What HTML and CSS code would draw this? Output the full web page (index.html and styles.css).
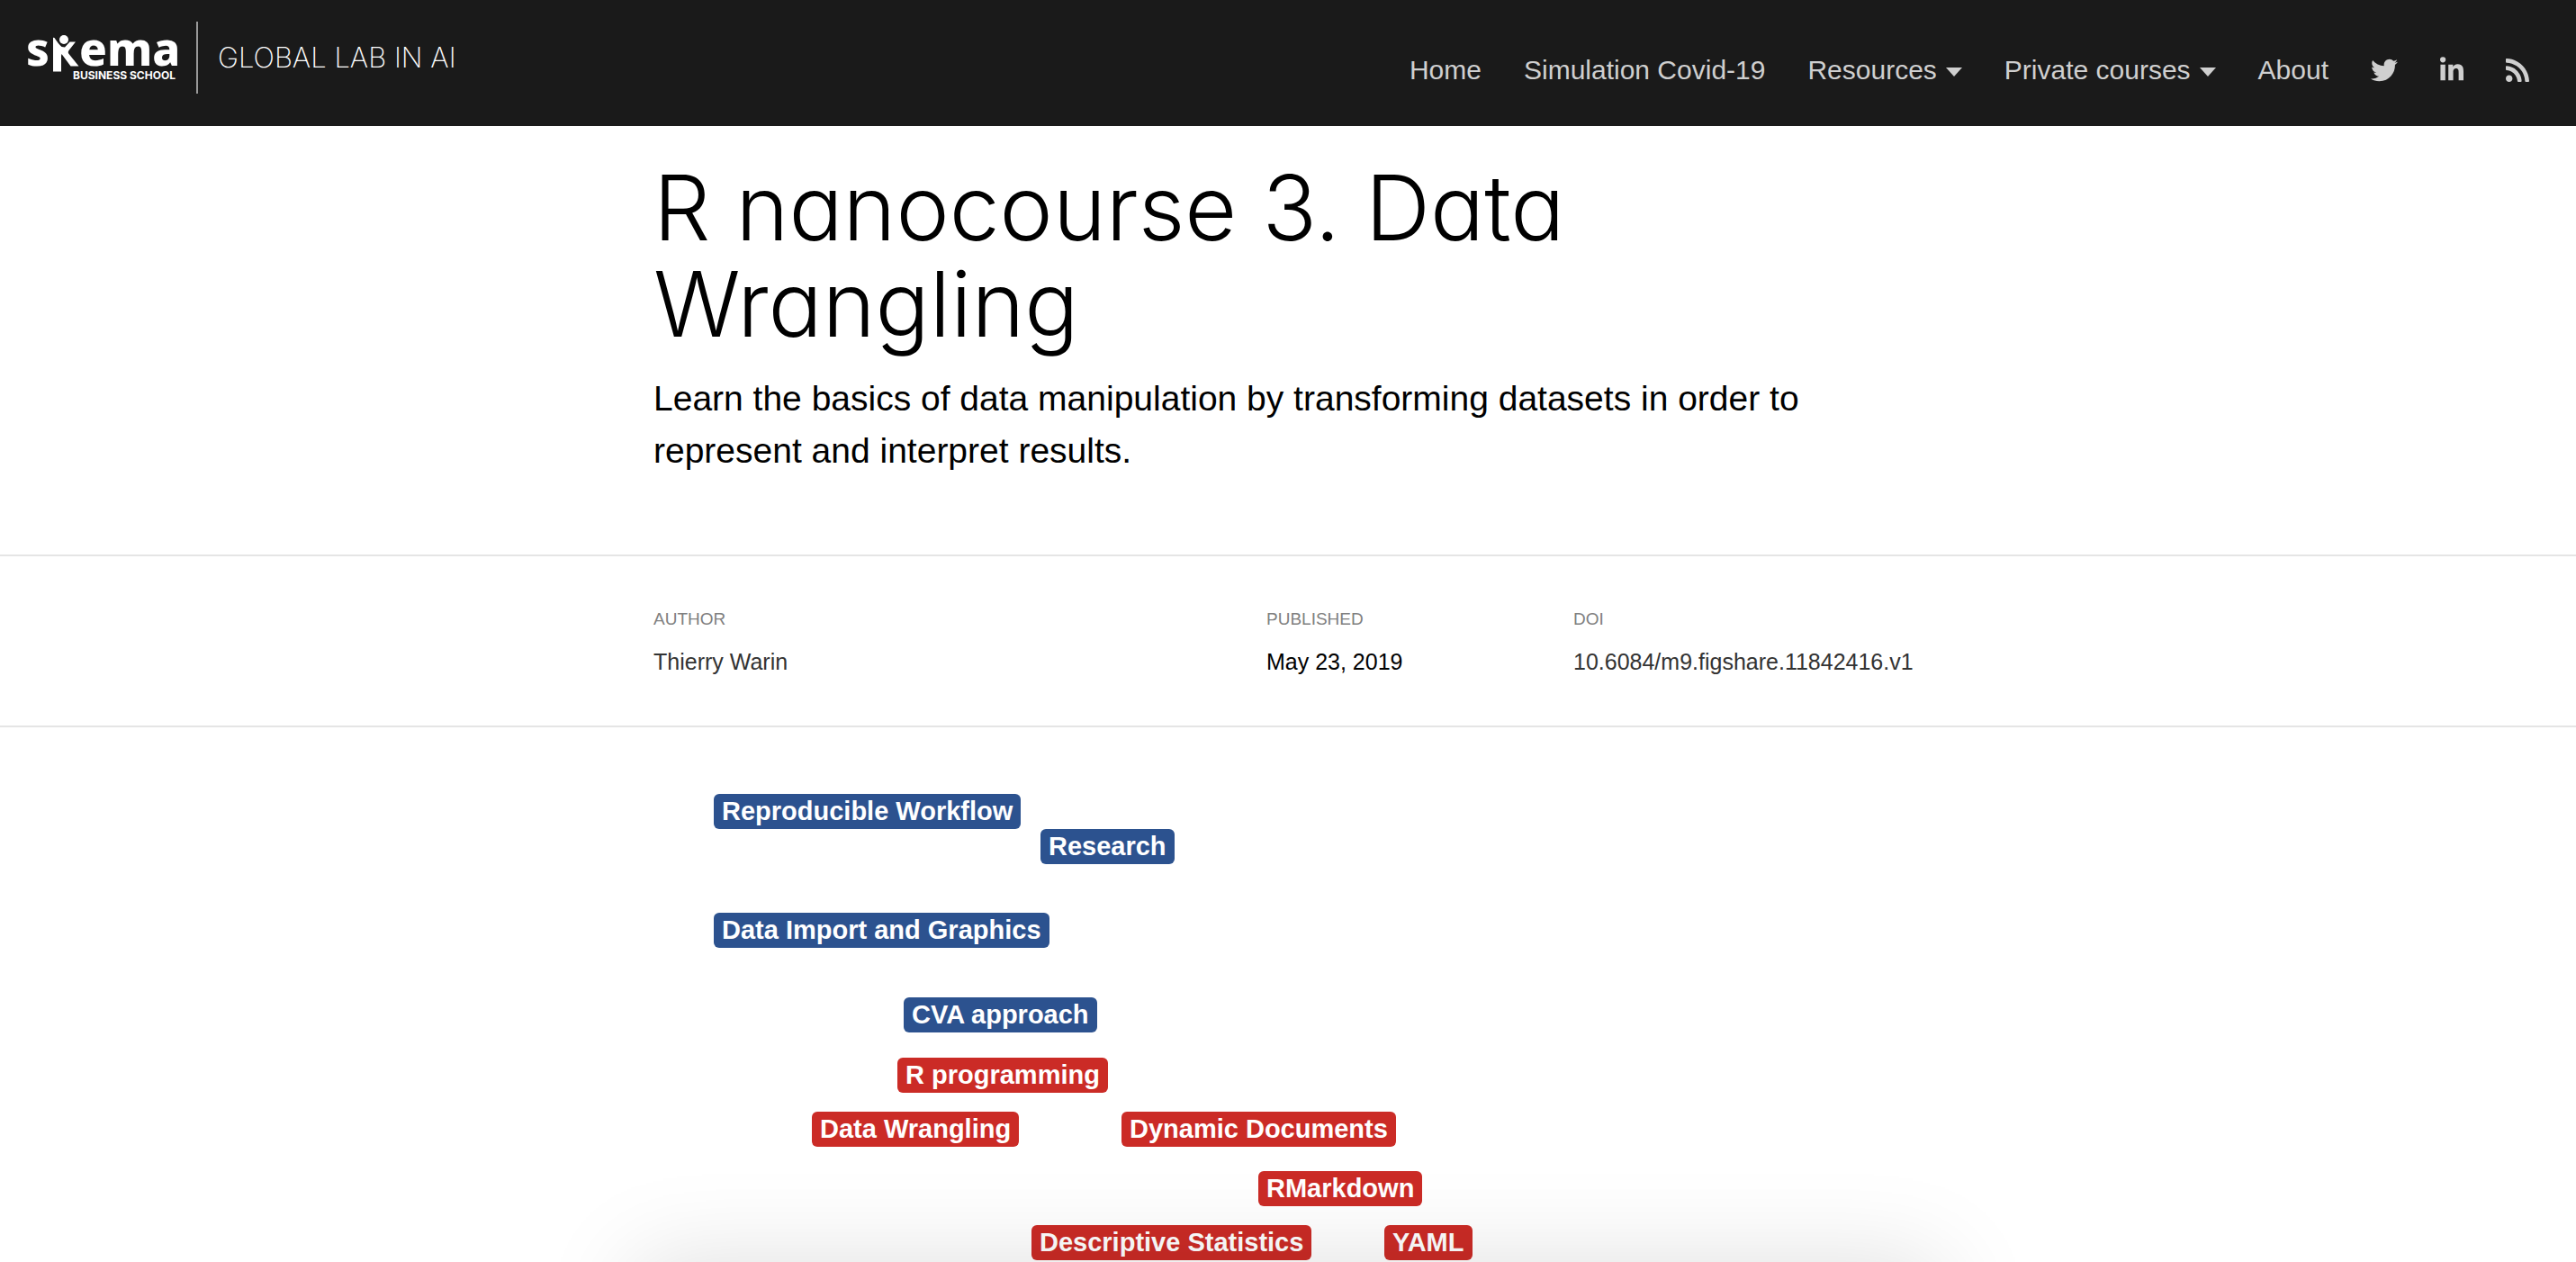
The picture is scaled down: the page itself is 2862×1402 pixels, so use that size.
FILE: index.html
```html
<!DOCTYPE html>
<html lang="en">
<head>
<meta charset="utf-8">
<title>R nanocourse 3. Data Wrangling</title>
<link rel="stylesheet" href="styles.css">
</head>
<body>
<header class="site-header">
  <a class="brand" href="#">
    <span class="logo">
      <span class="logo-name">s<svg class="logo-k" viewBox="0 0 29 41" aria-label="k"><circle cx="12" cy="5" r="5"/><path d="M0 2.700 L1.500 3 Q6 10 9.500 13 L13 13.500 L18.500 7.500 H25 L17.500 17 Q16 19 17.200 20.500 L28.500 34.500 H19.500 L9.500 21 L9 23 V40.500 H0 Z"/></svg>ema</span>
      <span class="logo-sub">BUSINESS SCHOOL</span>
    </span>
    <span class="brand-title">GLOBAL LAB IN AI</span>
  </a>
  <nav class="site-nav">
    <a href="#">Home</a>
    <a href="#">Simulation Covid-19</a>
    <button type="button">Resources<span class="caret"></span></button>
    <button type="button">Private courses<span class="caret"></span></button>
    <a href="#">About</a>
    <a href="#" aria-label="Twitter"><svg class="icon icon-wide" viewBox="0 0 512 512"><path d="M459.370 151.716c.325 4.548.325 9.097.325 13.645 0 138.720-105.583 298.558-298.558 298.558-59.452 0-114.680-17.219-161.137-47.106 8.447.974 16.568 1.299 25.340 1.299 49.055 0 94.213-16.568 130.274-44.832-46.132-.975-84.792-31.188-98.112-72.772 6.498.974 12.995 1.624 19.818 1.624 9.421 0 18.843-1.300 27.614-3.573-48.081-9.747-84.143-51.980-84.143-102.985v-1.299c13.969 7.797 30.214 12.670 47.431 13.319-28.264-18.843-46.781-51.005-46.781-87.391 0-19.492 5.197-37.360 14.294-52.954 51.655 63.675 129.300 105.258 216.365 109.807-1.624-7.797-2.599-15.918-2.599-24.040 0-57.828 46.782-104.934 104.934-104.934 30.213 0 57.502 12.670 76.670 33.137 23.715-4.548 46.456-13.320 66.599-25.340-7.798 24.366-24.366 44.833-46.132 57.827 21.117-2.273 41.584-8.122 60.426-16.243-14.292 20.791-32.161 39.308-52.628 54.253z"/></svg></a>
    <a href="#" aria-label="LinkedIn"><svg class="icon" viewBox="0 0 448 512"><path d="M100.280 448H7.400V148.900h92.880zM53.790 108.100C24.090 108.100 0 83.500 0 53.800a53.790 53.790 0 0 1 107.580 0c0 29.700-24.100 54.300-53.790 54.300zM447.900 448h-92.680V302.400c0-34.700-.7-79.200-48.290-79.200-48.290 0-55.690 37.700-55.690 76.700V448h-92.780V148.900h89.080v40.800h1.300c12.400-23.500 42.690-48.300 87.880-48.300 94 0 111.280 61.900 111.280 142.300V448z"/></svg></a>
    <a href="#" aria-label="RSS"><svg class="icon" viewBox="0 0 448 512"><path d="M128.081 415.959c0 35.369-28.672 64.041-64.041 64.041S0 451.328 0 415.959s28.672-64.041 64.041-64.041 64.040 28.673 64.040 64.041zm175.660 47.250c-8.354-154.600-132.185-278.587-286.950-286.950C7.656 175.765 0 183.105 0 192.253v48.069c0 8.415 6.490 15.472 14.887 16.018 111.832 7.284 201.473 96.702 208.772 208.772.547 8.397 7.604 14.887 16.018 14.887h48.069c9.149.001 16.489-7.655 15.995-16.790zm144.249.288C439.596 229.677 251.465 40.445 16.503 32.010 7.473 31.686 0 38.981 0 48.016v48.068c0 8.625 6.835 15.645 15.453 15.999 191.179 7.839 344.627 161.316 352.465 352.465.353 8.618 7.373 15.453 15.999 15.453h48.068c9.034-.001 16.329-7.474 16.005-16.504z"/></svg></a>
  </nav>
</header>
<main>
  <section class="intro">
    <div class="column">
      <h1>R nanocourse 3. Data Wrangling</h1>
      <p class="lead">Learn the basics of data manipulation by transforming datasets in order to represent and interpret results.</p>
    </div>
  </section>
  <section class="byline">
    <dl class="column byline-grid">
      <div><dt>Author</dt><dd>Thierry Warin</dd></div>
      <div><dt>Published</dt><dd class="date">May 23, 2019</dd></div>
      <div><dt>DOI</dt><dd><a href="#">10.6084/m9.figshare.11842416.v1</a></dd></div>
    </dl>
  </section>
  <section class="column network" aria-label="Course network">
    <span class="node workflow">Reproducible Workflow</span>
    <span class="node research">Research</span>
    <span class="node import">Data Import and Graphics</span>
    <span class="node cva">CVA approach</span>
    <span class="node course programming">R programming</span>
    <span class="node course wrangling">Data Wrangling</span>
    <span class="node course documents">Dynamic Documents</span>
    <span class="node course rmarkdown">RMarkdown</span>
    <span class="node course statistics">Descriptive Statistics</span>
    <span class="node course yaml">YAML</span>
  </section>
</main>
<div class="bottom-shadow"></div>
</body>
</html>
```
FILE: styles.css
```css
* { box-sizing: border-box; }

body {
  margin: 0;
  background: #fff;
  color: #000;
  font-family: "Liberation Sans", Arial, sans-serif;
  height: 100vh;
  overflow: hidden;
}

a { color: inherit; text-decoration: none; }

.site-header {
  display: flex;
  justify-content: space-between;
  height: 140px;
  padding: 24px 52px 0 29px;
  background: #1a1a1a;
  color: #cfcfcf;
}

.brand { display: flex; height: 80px; color: #fff; }

.logo {
  display: flex;
  flex-direction: column;
  width: 191px;
  padding-top: 9px;
  border-right: 2px solid #999;
}

.logo-name {
  display: flex;
  align-items: flex-start;
  height: 40px;
  font: 800 51px/40px "Noto Sans", sans-serif;
}

.logo-k { width: 29px; height: 41px; margin: 6px 0 0 4px; fill: #fff; flex: none; }

.logo-sub {
  padding: 5px 0 0 52px;
  font: 700 12px/12px Inter, sans-serif;
  white-space: nowrap;
}

.brand-title {
  padding: 20px 0 0 22px;
  font: 200 31px/40px Inter, sans-serif;
  white-space: nowrap;
}

.site-nav {
  display: flex;
  align-items: center;
  gap: 47px;
  height: 108px;
}

.site-nav a, .site-nav button {
  display: flex;
  align-items: center;
  padding: 0;
  border: 0;
  background: none;
  color: inherit;
  font: 30px/34px "Liberation Sans", Arial, sans-serif;
  white-space: nowrap;
}

.caret {
  margin: 4px 0 0 10px;
  border: 9px solid transparent;
  border-top: 10px solid currentColor;
  border-bottom: 0;
}

.icon { width: 26px; height: 30px; fill: currentColor; }
.icon-wide { width: 30px; }

.column { width: 100%; max-width: 1410px; margin: 0 auto; }

.intro { padding: 37px 0 86px; border-bottom: 2px solid #e5e5e5; }

h1 {
  max-width: 1290px;
  margin: 0;
  font: 300 100px/107px Inter, sans-serif;
  font-feature-settings: "cv11";
}

.lead {
  max-width: 1290px;
  margin: 0;
  padding-top: 23px;
  font-size: 39px;
  line-height: 58px;
}

.byline { padding: 56px 0 50px; border-bottom: 2px solid #e5e5e5; }

.byline-grid { display: grid; grid-template-columns: 681fr 341fr 388fr; }

dt {
  color: #808080;
  font-size: 19px;
  line-height: 28px;
  text-transform: uppercase;
}

dd {
  margin: 13px 0 0;
  color: #333;
  font-size: 25px;
  line-height: 41px;
}

.date { color: #000; }

.network { position: relative; height: 600px; }

.node {
  position: absolute;
  padding: 0 9px;
  border-radius: 6px;
  background: #2c528f;
  color: #fff;
  font-size: 29px;
  font-weight: 700;
  line-height: 39px;
  white-space: nowrap;
}

.course { background: #cb2b26; }

.workflow { left: 67px; top: 74px; }
.research { left: 430px; top: 113px; }
.import { left: 67px; top: 206px; }
.cva { left: 278px; top: 300px; }
.programming { left: 271px; top: 367px; }
.wrangling { left: 176px; top: 427px; }
.documents { left: 520px; top: 427px; }
.rmarkdown { left: 672px; top: 493px; }
.statistics { left: 420px; top: 553px; }
.yaml { left: 812px; top: 553px; }

.bottom-shadow {
  position: fixed;
  left: 0;
  right: 0;
  top: 100%;
  height: 400px;
  width: 100%;
  max-width: 1450px;
  margin: 0 auto;
  box-shadow: 0 0 100px rgba(0, 0, 0, 0.13);
  pointer-events: none;
}
```
